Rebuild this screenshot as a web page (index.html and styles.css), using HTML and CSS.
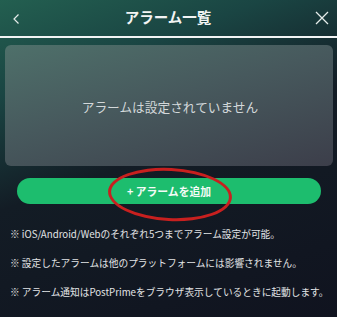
FILE: index.html
```html
<!DOCTYPE html>
<html lang="ja">
<head>
<meta charset="utf-8">
<link rel="stylesheet" href="styles.css">
</head>
<body>
<div class="page">
  <header class="header">
    <svg class="back" width="6" height="10" viewBox="0 0 6 10"><path d="M5.5 0.5 L1 5 L5.5 9.5" fill="none" stroke="#e6ecea" stroke-width="1.2"/></svg>
    <h1 class="title">アラーム一覧</h1>
    <svg class="close" width="14" height="14" viewBox="0 0 14 14"><path d="M1 1 L13 13 M13 1 L1 13" fill="none" stroke="#e6ecea" stroke-width="1.3"/></svg>
  </header>
  <section class="card">
    <p class="empty">アラームは設定されていません</p>
  </section>
  <div class="btn-wrap">
    <button class="add">+ アラームを追加</button>
    <span class="ring"></span>
  </div>
  <ul class="notes">
    <li>※ iOS/Android/Webのそれぞれ5つまでアラーム設定が可能。</li>
    <li>※ 設定したアラームは他のプラットフォームには影響されません。</li>
    <li>※ アラーム通知はPostPrimeをブラウザ表示しているときに起動します。</li>
  </ul>
</div>
</body>
</html>
```
FILE: styles.css
```css
html, body {
  margin: 0;
  padding: 0;
  height: 100%;
}
body {
  font-family: "Noto Sans CJK JP", "Noto Sans", sans-serif;
  background: linear-gradient(160deg, #235f50 0%, #1a4543 22%, #131c25 48%, #10131f 100%);
  color: #e4e6e8;
  overflow: hidden;
}
.page {
  display: flex;
  flex-direction: column;
  height: 317px;
}
.header {
  height: 36px;
  border-bottom: 2px solid #f2f4f4;
  display: flex;
  align-items: center;
  justify-content: space-between;
  padding: 0 8px 0 13px;
  box-sizing: content-box;
}
.back { margin-top: 1px; }
.title {
  margin: 0;
  font-size: 14.5px;
  font-weight: 700;
  color: #f2f4f4;
  line-height: 1;
  margin-top: -2px;
  margin-left: 2px;
}
.close { margin-top: -1px; }
.card {
  margin: 7px 4px 0 5px;
  height: 121px;
  border-radius: 6px;
  background: linear-gradient(165deg, #4e706a 0%, #47595d 45%, #3c3e4a 100%);
  display: flex;
  align-items: center;
  justify-content: center;
}
.empty {
  margin: 0;
  font-size: 12.7px;
  color: #d3d8da;
  margin-left: 2px;
  margin-top: 2px;
}
.btn-wrap {
  position: relative;
  margin: 12px 16px 0 17px;
}
.add {
  width: 100%;
  height: 26px;
  border: none;
  border-radius: 13px;
  background: #1dbd6e;
  color: #f4fbf7;
  font-family: "Noto Sans CJK JP", "Noto Sans", sans-serif;
  font-weight: 700;
  font-size: 10.8px;
  padding: 0;
  display: block;
}
.ring {
  position: absolute;
  left: 91px;
  top: -10px;
  width: 118px;
  height: 47px;
  border: 3px solid #c8201f;
  border-radius: 50%;
  transform: rotate(3deg);
}
.notes {
  list-style: none;
  margin: 23px 0 0 10px;
  padding: 0;
  font-size: 9.7px;
  color: #e2e4e6;
  display: flex;
  flex-direction: column;
  gap: 14px;
}
.notes li {
  line-height: 15px;
  white-space: nowrap;
}
```
